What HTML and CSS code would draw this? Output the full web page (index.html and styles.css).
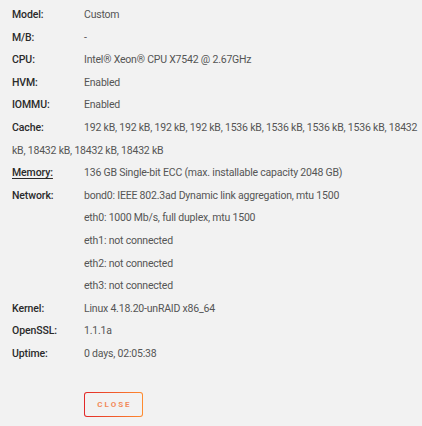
FILE: index.html
```html
<!DOCTYPE html>
<html>
<head>
<meta charset="utf-8">
<link rel="stylesheet" href="styles.css">
</head>
<body>
<div class="info">
  <div class="row"><span class="lbl">Model:</span>Custom</div>
  <div class="row"><span class="lbl">M/B:</span>-</div>
  <div class="row"><span class="lbl">CPU:</span>Intel® Xeon® CPU X7542 @ 2.67GHz</div>
  <div class="row"><span class="lbl">HVM:</span>Enabled</div>
  <div class="row"><span class="lbl">IOMMU:</span>Enabled</div>
  <div class="row"><span class="lbl">Cache:</span>192 kB, 192 kB, 192 kB, 192 kB, 1536 kB, 1536 kB, 1536 kB, 1536 kB, 18432 kB, 18432 kB, 18432 kB, 18432 kB</div>
  <div class="row"><span class="lbl"><u>Memory:</u></span>136 GB Single-bit ECC (max. installable capacity 2048 GB)</div>
  <div class="row"><span class="lbl">Network:</span>bond0: IEEE 802.3ad Dynamic link aggregation, mtu 1500</div>
  <div class="row"><span class="lbl"></span>eth0: 1000 Mb/s, full duplex, mtu 1500</div>
  <div class="row"><span class="lbl"></span>eth1: not connected</div>
  <div class="row"><span class="lbl"></span>eth2: not connected</div>
  <div class="row"><span class="lbl"></span>eth3: not connected</div>
  <div class="row"><span class="lbl">Kernel:</span>Linux 4.18.20-unRAID x86_64</div>
  <div class="row"><span class="lbl">OpenSSL:</span>1.1.1a</div>
  <div class="row"><span class="lbl">Uptime:</span>0 days, 02:05:38</div>
  <div class="actions"><button class="close">CLOSE</button></div>
</div>
</body>
</html>
```
FILE: styles.css
```css
html, body {
  margin: 0;
  padding: 0;
  background: #f2f2f2;
  overflow: hidden;
}
body {
  font-family: Roboto, "Liberation Sans", sans-serif;
  font-size: 10.5px;
  color: #555;
}
.info {
  width: 420px;
  padding: 4px 0 0 12px;
}
.row {
  line-height: 22.6px;
  letter-spacing: -0.2px;
}
.lbl {
  display: inline-block;
  width: 72px;
  color: #2a2a2a;
  font-weight: 500;
  letter-spacing: -0.1px;
}
.lbl u {
  text-decoration-thickness: 1px;
  text-underline-offset: 2px;
}
.actions {
  padding: 26px 0 0 72px;
}
.close {
  width: 59px;
  height: 25px;
  border: 1px solid transparent;
  border-radius: 3px;
  background: linear-gradient(#f2f2f2, #f2f2f2) padding-box,
              linear-gradient(90deg, #e22828, #ff8c2f) border-box;
  font-family: Roboto, "Liberation Sans", sans-serif;
  font-size: 8px;
  font-weight: 700;
  letter-spacing: 2px;
  color: #f28a5a;
  padding: 0 0 0 2px;
  cursor: pointer;
}
```
